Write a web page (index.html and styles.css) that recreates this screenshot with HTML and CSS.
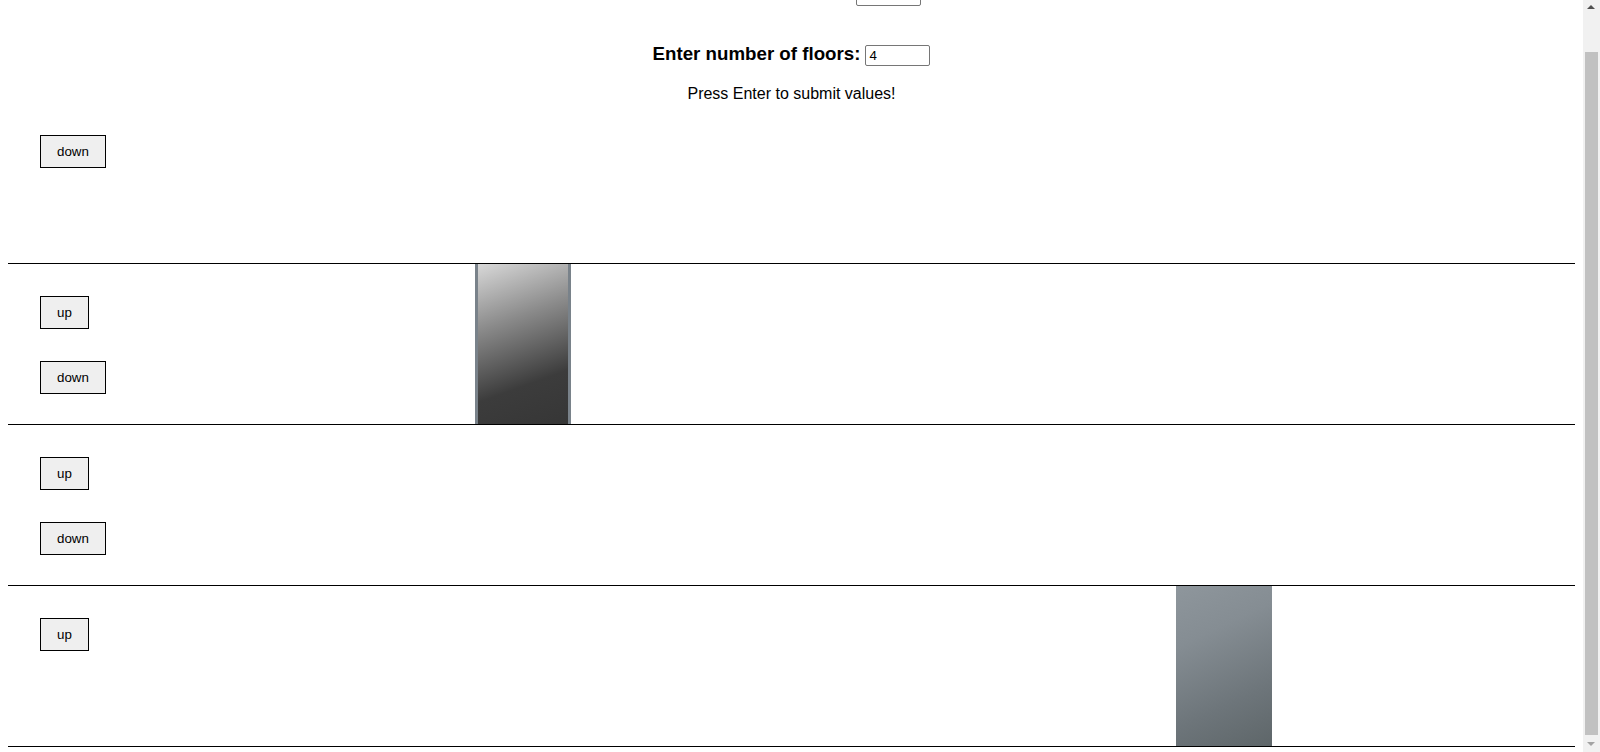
FILE: index.html
```html
<!DOCTYPE html>
<html lang="en">
<head>
<meta charset="utf-8">
<title>Elevator</title>
<link rel="stylesheet" href="styles.css">
</head>
<body>
<div class="setup">
  <div class="field">
    <label class="field-label" for="lifts">Enter number of lifts:</label>
    <input class="field-input" id="lifts" type="text" value="">
  </div>
  <div class="field">
    <label class="field-label" for="floors">Enter number of floors:</label>
    <input class="field-input" id="floors" type="text" value="4">
  </div>
  <p class="hint">Press Enter to submit values!</p>
</div>
<div class="building">
  <div class="floor">
    <button class="call-btn">down</button>
  </div>
  <div class="floor">
    <button class="call-btn">up</button>
    <button class="call-btn">down</button>
    <div class="lift lift-active" style="left: 467px"></div>
  </div>
  <div class="floor">
    <button class="call-btn">up</button>
    <button class="call-btn">down</button>
  </div>
  <div class="floor">
    <button class="call-btn">up</button>
    <div class="lift lift-idle" style="left: 1168px"></div>
  </div>
</div>
<div class="scrollbar" aria-hidden="true">
  <div class="sb-arrow sb-up"></div>
  <div class="sb-track"><div class="sb-thumb"></div></div>
  <div class="sb-arrow sb-down"></div>
</div>
<script src="script.js"></script>
</body>
</html>
```
FILE: styles.css
```css
html, body {
  background: #ffffff;
}
html {
  scrollbar-width: none;
}
html::-webkit-scrollbar {
  display: none;
}
body {
  margin: 8px 25px 5px 8px;
  font-family: "Liberation Sans", Arial, sans-serif;
  color: #000000;
}
.setup {
  padding-top: 13px;
  display: flex;
  flex-direction: column;
  align-items: center;
}
.field {
  display: flex;
  align-items: flex-end;
  gap: 5px;
  height: 25px;
  margin-bottom: 35px;
}
.field:nth-child(2) {
  margin-bottom: 19px;
}
.field-label {
  font-size: 18.72px;
  font-weight: bold;
  line-height: 25px;
}
.field-input {
  box-sizing: border-box;
  width: 65px;
  height: 21px;
  border: 1px solid #767676;
  border-radius: 2px;
  padding: 1px 3px;
  font-family: "Liberation Sans", Arial, sans-serif;
  font-size: 13.333px;
  color: #000;
  background: #fff;
  outline: none;
}
.hint {
  margin: 0;
  font-size: 16px;
  line-height: 18px;
}
.floor {
  position: relative;
  height: 128px;
  padding-top: 32px;
  border-bottom: 1px solid #000;
  display: flex;
  flex-direction: column;
  align-items: flex-start;
  gap: 32px;
}
.call-btn {
  margin: 0 0 0 32px;
  padding: 8px 16px;
  height: 33px;
  box-sizing: border-box;
  border: 1px solid #000;
  border-radius: 0;
  background: #efefef;
  font-family: "Liberation Sans", Arial, sans-serif;
  font-size: 13.333px;
  line-height: 15px;
  color: #000;
}
.lift {
  position: absolute;
  top: 0;
  width: 96px;
  height: 160px;
  box-sizing: border-box;
}
.lift-active {
  border-left: 3px solid #79828a;
  border-right: 3px solid #79828a;
  background: linear-gradient(160deg, #d8d8d8 0%, #8a8a8a 35%, #3c3c3c 72%, #363636 100%);
}
.lift-idle {
  background: linear-gradient(155deg, #8e969c 0%, #858d93 30%, #6d757a 70%, #5e6669 100%);
}
.scrollbar {
  position: fixed;
  top: 0;
  right: 0;
  width: 17px;
  height: 100vh;
  background: #f1f1f1;
  display: flex;
  flex-direction: column;
}
.sb-arrow {
  height: 17px;
  flex: none;
  position: relative;
}
.sb-arrow::after {
  content: "";
  position: absolute;
  left: 4px;
  width: 0;
  height: 0;
  border-left: 4px solid transparent;
  border-right: 4px solid transparent;
}
.sb-up::after {
  top: 5px;
  border-bottom: 4px solid #505050;
}
.sb-down::after {
  top: 7px;
  border-top: 4px solid #a3a3a3;
}
.sb-track {
  flex: 1;
  display: flex;
  flex-direction: column;
  justify-content: flex-end;
  padding: 0 2px;
}
.sb-thumb {
  height: 683px;
  background: #c1c1c1;
}
```
FILE: script.js
```js
window.scrollTo(0, document.documentElement.scrollHeight);
window.addEventListener('load', function () {
  window.scrollTo(0, document.documentElement.scrollHeight);
});
```
